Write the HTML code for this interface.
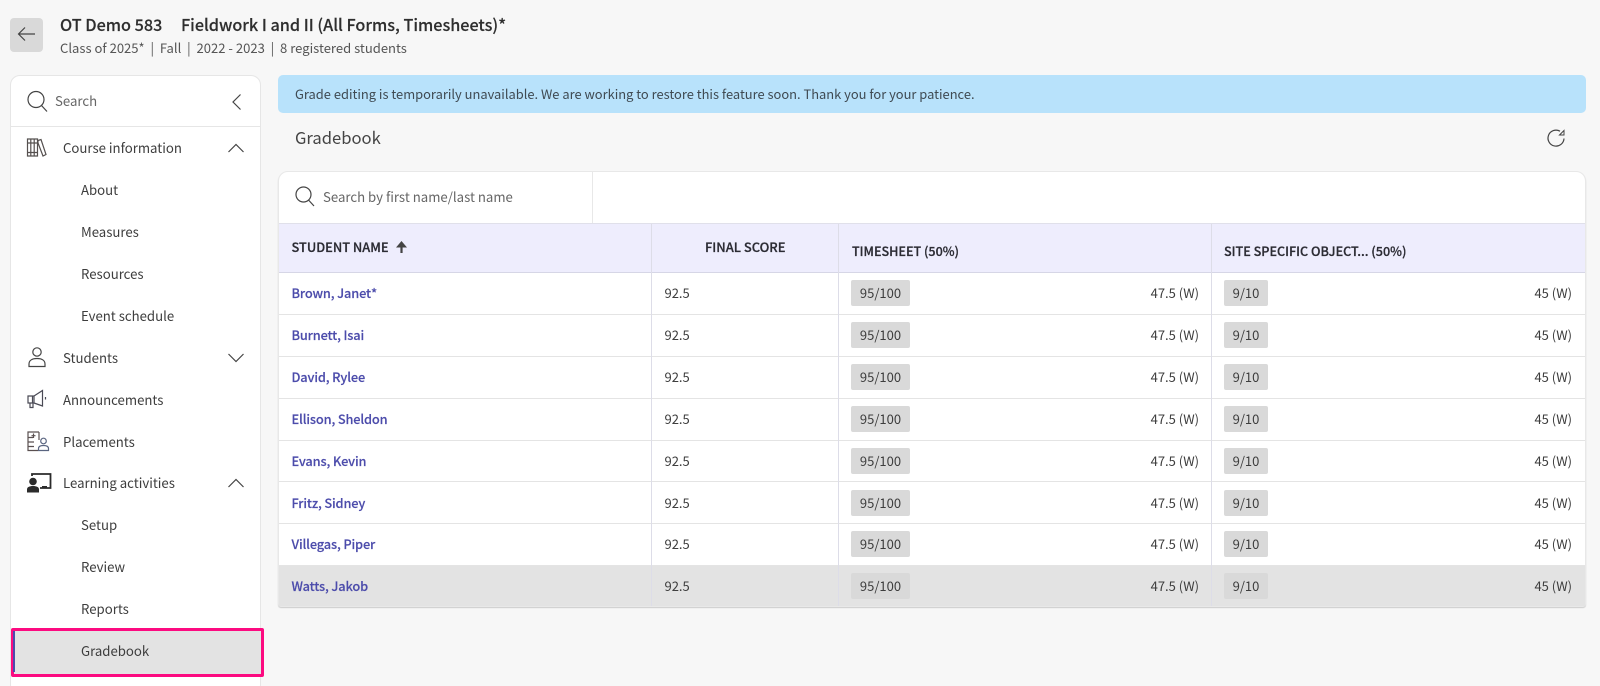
<!DOCTYPE html>
<html><head><meta charset="utf-8"><style>
*{box-sizing:border-box}
html,body{margin:0;padding:0;width:1600px;height:686px;overflow:hidden;background:#f7f7f7}
body{position:relative;font-family:"Noto Sans CJK SC","Liberation Sans",sans-serif;color:#3d3d3d;font-size:13px}
.t{position:absolute;white-space:nowrap;line-height:20px;height:20px}
.n{font-size:13.2px}
.b{position:absolute}
.l{color:#4c4cab;font-weight:500;font-size:12.8px;letter-spacing:-.15px;-webkit-text-stroke:.15px #4c4cab}
.h{color:#2b2b33;font-weight:500;font-size:12.8px;-webkit-text-stroke:.25px #2b2b33}
.chip{position:absolute;height:26px;background:#d9d9d9;border-radius:2px;text-align:center;line-height:26px;white-space:nowrap;font-size:13px}
.r{text-align:right}
svg{position:absolute;overflow:visible;fill:none;stroke:#444;stroke-width:1.2}
</style></head><body>

<div class="b" style="left:10px;top:18px;width:33px;height:34px;background:#d9d9d9;border-radius:4px"></div>
<svg style="left:10px;top:18px" width="33" height="34"><path d="M8.500 16H25M15 9.500L8.500 16L15 22.500"/></svg>
<div class="t" style="left:60px;top:13px;font-size:16.200px;font-weight:500;line-height:22px;height:22px;color:#2e2e2e;-webkit-text-stroke:.15px #2e2e2e">OT Demo 583</div>
<div class="t" style="left:181px;top:13px;font-size:16.200px;font-weight:500;line-height:22px;height:22px;color:#2e2e2e;-webkit-text-stroke:.15px #2e2e2e">Fieldwork I and II (All Forms, Timesheets)*</div>
<div class="t" style="left:60px;top:38px;font-size:13.050px;color:#555">Class of 2025*&nbsp; | &nbsp;Fall&nbsp; | &nbsp;2022 - 2023&nbsp; | &nbsp;8 registered students</div>

<div class="b" style="left:10px;top:75px;width:251px;height:620px;background:#fff;border:1px solid #e6e6e6;border-radius:10px"></div>
<div class="b" style="left:11px;top:126px;width:249px;height:1px;background:#e6e6e6"></div>
<svg style="left:27px;top:91px" width="22" height="22"><circle cx="9" cy="8.500" r="8"/><path d="M14.500 14.500L20 20.500"/></svg>
<div class="t n" style="left:55px;top:91px;color:#666">Search</div>
<svg style="left:232px;top:94px" width="10" height="16"><path d="M8.500 .5L1 8L8.500 15.500"/></svg>

<svg style="left:27px;top:138px" width="20" height="19"><path d="M.5 1H10.500V18H.5ZM3.800 1V18M7.200 1V18M.5 5H10.500M.5 14.500H10.500M11 2.500L14 1.500L19 16.500L16 18L11 5Z" stroke="#55504f"/></svg>
<div class="t n" style="left:63px;top:137.500px">Course information</div>
<svg style="left:228px;top:143px" width="16" height="10"><path d="M.5 9L8 1.500L15.500 9"/></svg>
<div class="t n" style="left:81px;top:180.300px">About</div>
<div class="t n" style="left:81px;top:222.200px">Measures</div>
<div class="t n" style="left:81px;top:264px">Resources</div>
<div class="t n" style="left:81px;top:305.900px">Event schedule</div>

<svg style="left:28px;top:347px" width="18" height="20"><circle cx="9" cy="5" r="4.200"/><path d="M1 19.500V17C1 13.500 4 11.500 9 11.500S17 13.500 17 17V19.500Z"/></svg>
<div class="t n" style="left:63px;top:347.700px">Students</div>
<svg style="left:228px;top:353px" width="16" height="10"><path d="M.5 1L8 8.500L15.500 1"/></svg>

<svg style="left:27px;top:389px" width="20" height="20"><path d="M1 7H7V14H1ZM7 7L15.500 1.500V17L7 14M3 14V18.500H6V14M18.500 8V10.500M5.500 7V14" stroke="#4a4a55"/></svg>
<div class="t n" style="left:63px;top:389.500px">Announcements</div>

<svg style="left:27px;top:431px" width="23" height="20"><path d="M12 1H1V19.500H11M12 1V9M1 6.500H6M1 11H7M1 15.500H7M6.500 2.500V7M4.500 4.700H8.500" stroke="#5a5050"/><circle cx="16.500" cy="10" r="2.800" stroke="#5a6580"/><path d="M11.500 19.500V17.500C11.500 15.500 13.500 14.500 16.500 14.500S21.500 15.500 21.500 17.500V19.500Z" stroke="#5a6580"/></svg>
<div class="t n" style="left:63px;top:432px">Placements</div>

<svg style="left:27px;top:473px" width="25" height="20"><circle cx="6" cy="8.500" r="3.800" fill="#2b2b2b" stroke="none"/><path d="M0 19.500V16.500C0 14 2.500 13 6 13S12 14 12 16.500V19.500Z" fill="#2b2b2b" stroke="none"/><path d="M5 3V1H23.500V15H13" stroke="#2b2b2b" stroke-width="1.800"/><path d="M15 13H20V15H15Z" fill="#2b2b2b" stroke="none"/></svg>
<div class="t n" style="left:63px;top:473.200px">Learning activities</div>
<svg style="left:228px;top:478px" width="16" height="10"><path d="M.5 9L8 1.500L15.500 9"/></svg>
<div class="t n" style="left:81px;top:515.100px">Setup</div>
<div class="t n" style="left:81px;top:556.900px">Review</div>
<div class="t n" style="left:81px;top:598.700px">Reports</div>

<div class="b" style="left:11px;top:628px;width:253px;height:49px;background:#e3e3e3;border:3px solid #fc0a80;border-radius:2px"></div>
<div class="b" style="left:12.500px;top:631px;width:2.500px;height:41px;background:#4c4cab"></div>
<div class="t n" style="left:81px;top:640.600px">Gradebook</div>

<div class="b" style="left:278px;top:75px;width:1308px;height:38px;background:#b8e2fb;border-radius:5px"></div>
<div class="t" style="left:295px;top:84px;color:#3f4a52;font-size:12.900px">Grade editing is temporarily unavailable. We are working to restore this feature soon. Thank you for your patience.</div>
<div class="t" style="left:295px;top:125px;font-size:16.600px;line-height:24px;height:24px;color:#444">Gradebook</div>
<svg style="left:1547px;top:129px" width="18" height="17"><path d="M13 2.200A8 8 0 1 0 17 9.500"/><path d="M12.500 6L17 1.500V6Z" stroke-width="1"/></svg>

<div class="b" style="left:278px;top:171px;width:1308px;height:436px;background:#fff;border:1px solid #e8e8e8;border-radius:10px 10px 3px 3px;box-shadow:0 1px 1px #ccc"></div>
<svg style="left:295px;top:186px" width="20" height="21"><circle cx="8.500" cy="8.500" r="7.500"/><path d="M13.500 14L19 20"/></svg>
<div class="t n" style="left:323px;top:187px;color:#666">Search by first name/last name</div>
<div class="b" style="left:592px;top:172px;width:1px;height:51px;background:#e8e8e8"></div>

<div class="b" style="left:279px;top:223px;width:1306px;height:50px;background:#eeedfd;border-top:1px solid #e0e0ea;border-bottom:1px solid #d6d6e6"></div>
<div class="t h" style="left:291.500px;top:237px">STUDENT NAME</div>
<svg style="left:396px;top:241px" width="11" height="12"><path d="M5.500 12V3" stroke="#444" stroke-width="2.200"/><path d="M0 6.500L5.500 0L11 6.500Z" fill="#444" stroke="none"/></svg>
<div class="t h" style="left:705px;top:237px;font-size:12.900px">FINAL SCORE</div>
<div class="t h" style="left:852px;top:241px;font-size:12.550px">TIMESHEET (50%)</div>
<div class="t h" style="left:1224px;top:241px;font-size:12.600px">SITE SPECIFIC OBJECT... (50%)</div>

<div class="b" style="left:279px;top:565px;width:1306px;height:41px;background:#e3e3e3"></div>
<div class="b" style="left:279px;top:314px;width:1306px;height:1px;background:#e4e4e4"></div>
<div class="b" style="left:279px;top:356px;width:1306px;height:1px;background:#e4e4e4"></div>
<div class="b" style="left:279px;top:398px;width:1306px;height:1px;background:#e4e4e4"></div>
<div class="b" style="left:279px;top:440px;width:1306px;height:1px;background:#e4e4e4"></div>
<div class="b" style="left:279px;top:481px;width:1306px;height:1px;background:#e4e4e4"></div>
<div class="b" style="left:279px;top:523px;width:1306px;height:1px;background:#e4e4e4"></div>
<div class="b" style="left:279px;top:565px;width:1306px;height:1px;background:#e4e4e4"></div>
<div class="b" style="left:651px;top:224px;width:1px;height:382px;background:#dddde8"></div>
<div class="b" style="left:838px;top:224px;width:1px;height:382px;background:#dddde8"></div>
<div class="b" style="left:1211px;top:224px;width:1px;height:382px;background:#dddde8"></div>

<div class="t l" style="left:291.500px;top:283px">Brown, Janet*</div><div class="t" style="left:664.500px;top:283px">92.5</div><div class="chip" style="left:851px;top:280px;width:59px">95/100</div><div class="t r" style="left:1099px;top:283px;width:100px">47.5 (W)</div><div class="chip" style="left:1224px;top:280px;width:44px">9/10</div><div class="t r" style="left:1472px;top:283px;width:100px">45 (W)</div>
<div class="t l" style="left:291.500px;top:325px">Burnett, Isai</div><div class="t" style="left:664.500px;top:325px">92.5</div><div class="chip" style="left:851px;top:322px;width:59px">95/100</div><div class="t r" style="left:1099px;top:325px;width:100px">47.5 (W)</div><div class="chip" style="left:1224px;top:322px;width:44px">9/10</div><div class="t r" style="left:1472px;top:325px;width:100px">45 (W)</div>
<div class="t l" style="left:291.500px;top:367px">David, Rylee</div><div class="t" style="left:664.500px;top:367px">92.5</div><div class="chip" style="left:851px;top:364px;width:59px">95/100</div><div class="t r" style="left:1099px;top:367px;width:100px">47.5 (W)</div><div class="chip" style="left:1224px;top:364px;width:44px">9/10</div><div class="t r" style="left:1472px;top:367px;width:100px">45 (W)</div>
<div class="t l" style="left:291.500px;top:409px">Ellison, Sheldon</div><div class="t" style="left:664.500px;top:409px">92.5</div><div class="chip" style="left:851px;top:406px;width:59px">95/100</div><div class="t r" style="left:1099px;top:409px;width:100px">47.5 (W)</div><div class="chip" style="left:1224px;top:406px;width:44px">9/10</div><div class="t r" style="left:1472px;top:409px;width:100px">45 (W)</div>
<div class="t l" style="left:291.500px;top:451px">Evans, Kevin</div><div class="t" style="left:664.500px;top:451px">92.5</div><div class="chip" style="left:851px;top:448px;width:59px">95/100</div><div class="t r" style="left:1099px;top:451px;width:100px">47.5 (W)</div><div class="chip" style="left:1224px;top:448px;width:44px">9/10</div><div class="t r" style="left:1472px;top:451px;width:100px">45 (W)</div>
<div class="t l" style="left:291.500px;top:493px">Fritz, Sidney</div><div class="t" style="left:664.500px;top:493px">92.5</div><div class="chip" style="left:851px;top:490px;width:59px">95/100</div><div class="t r" style="left:1099px;top:493px;width:100px">47.5 (W)</div><div class="chip" style="left:1224px;top:490px;width:44px">9/10</div><div class="t r" style="left:1472px;top:493px;width:100px">45 (W)</div>
<div class="t l" style="left:291.500px;top:534px">Villegas, Piper</div><div class="t" style="left:664.500px;top:534px">92.5</div><div class="chip" style="left:851px;top:531px;width:59px">95/100</div><div class="t r" style="left:1099px;top:534px;width:100px">47.5 (W)</div><div class="chip" style="left:1224px;top:531px;width:44px">9/10</div><div class="t r" style="left:1472px;top:534px;width:100px">45 (W)</div>
<div class="t l" style="left:291.500px;top:576px">Watts, Jakob</div><div class="t" style="left:664.500px;top:576px">92.5</div><div class="chip" style="left:851px;top:573px;width:59px">95/100</div><div class="t r" style="left:1099px;top:576px;width:100px">47.5 (W)</div><div class="chip" style="left:1224px;top:573px;width:44px">9/10</div><div class="t r" style="left:1472px;top:576px;width:100px">45 (W)</div>
</body></html>
